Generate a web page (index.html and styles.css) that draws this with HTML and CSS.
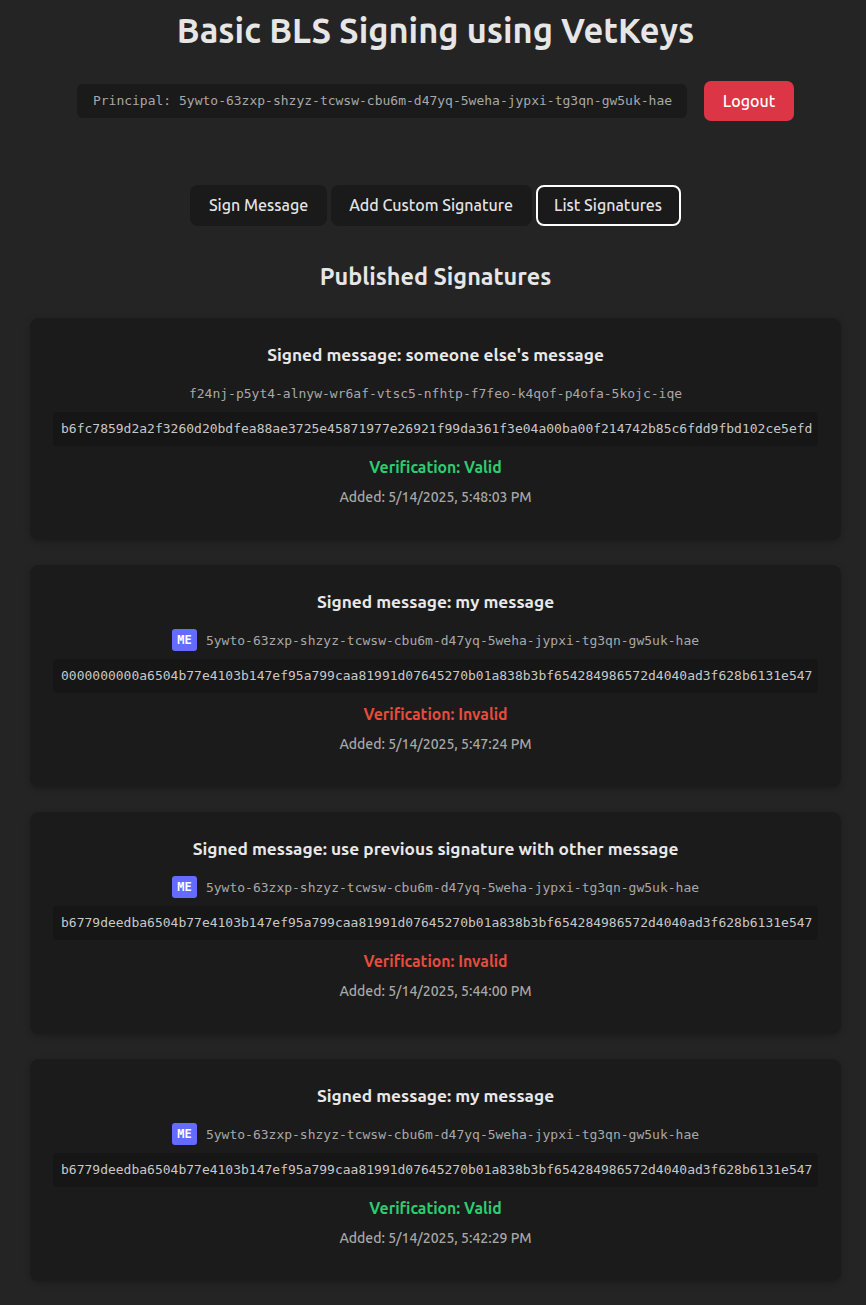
FILE: index.html
```html
<!DOCTYPE html>
<html lang="en">
<head>
<meta charset="utf-8">
<title>Basic BLS Signing using VetKeys</title>
<link rel="stylesheet" href="styles.css">
</head>
<body>
<main class="app">
  <h1 class="title">Basic BLS Signing using VetKeys</h1>
  <div class="session">
    <div class="principal">Principal: 5ywto-63zxp-shzyz-tcwsw-cbu6m-d47yq-5weha-jypxi-tg3qn-gw5uk-hae</div>
    <button class="logout">Logout</button>
  </div>
  <nav class="tabs">
    <button class="tab">Sign Message</button>
    <button class="tab">Add Custom Signature</button>
    <button class="tab active">List Signatures</button>
  </nav>
  <h2 class="section-title">Published Signatures</h2>
  <section class="list">
    <article class="card">
      <h3 class="card-title">Signed message: someone else's message</h3>
      <div class="owner"><span class="owner-id">f24nj-p5yt4-alnyw-wr6af-vtsc5-nfhtp-f7feo-k4qof-p4ofa-5kojc-iqe</span></div>
      <div class="sig">b6fc7859d2a2f3260d20bdfea88ae3725e45871977e26921f99da361f3e04a00ba00f214742b85c6fdd9fbd102ce5efd</div>
      <div class="verify valid">Verification: Valid</div>
      <div class="added">Added: 5/14/2025, 5:48:03 PM</div>
    </article>
    <article class="card">
      <h3 class="card-title">Signed message: my message</h3>
      <div class="owner"><span class="me">ME</span><span class="owner-id">5ywto-63zxp-shzyz-tcwsw-cbu6m-d47yq-5weha-jypxi-tg3qn-gw5uk-hae</span></div>
      <div class="sig">0000000000a6504b77e4103b147ef95a799caa81991d07645270b01a838b3bf654284986572d4040ad3f628b6131e547</div>
      <div class="verify invalid">Verification: Invalid</div>
      <div class="added">Added: 5/14/2025, 5:47:24 PM</div>
    </article>
    <article class="card">
      <h3 class="card-title">Signed message: use previous signature with other message</h3>
      <div class="owner"><span class="me">ME</span><span class="owner-id">5ywto-63zxp-shzyz-tcwsw-cbu6m-d47yq-5weha-jypxi-tg3qn-gw5uk-hae</span></div>
      <div class="sig">b6779deedba6504b77e4103b147ef95a799caa81991d07645270b01a838b3bf654284986572d4040ad3f628b6131e547</div>
      <div class="verify invalid">Verification: Invalid</div>
      <div class="added">Added: 5/14/2025, 5:44:00 PM</div>
    </article>
    <article class="card">
      <h3 class="card-title">Signed message: my message</h3>
      <div class="owner"><span class="me">ME</span><span class="owner-id">5ywto-63zxp-shzyz-tcwsw-cbu6m-d47yq-5weha-jypxi-tg3qn-gw5uk-hae</span></div>
      <div class="sig">b6779deedba6504b77e4103b147ef95a799caa81991d07645270b01a838b3bf654284986572d4040ad3f628b6131e547</div>
      <div class="verify valid">Verification: Valid</div>
      <div class="added">Added: 5/14/2025, 5:42:29 PM</div>
    </article>
  </section>
</main>
</body>
</html>
```

FILE: styles.css
```css
html, body {
  margin: 0;
  padding: 0;
  background: #242424;
}
body {
  font-family: "Ubuntu", Lato, "Noto Sans", sans-serif;
  font-weight: 500;
  color: rgba(255, 255, 255, 0.87);
}
.app {
  padding: 11px 25px 24px 30px;
  display: flex;
  flex-direction: column;
  align-items: stretch;
}
.title {
  margin: 0;
  font-size: 34.4px;
  line-height: 40px;
  font-weight: 700;
  text-align: center;
  color: #e6e6e6;
}
.session {
  margin-top: 30px;
  display: flex;
  justify-content: center;
  align-items: center;
  gap: 17px;
}
.principal {
  background: #1a1a1a;
  border-radius: 6px;
  padding: 8px 15px 8px 16px;
  font-family: "DejaVu Sans Mono", monospace;
  font-weight: 400;
  font-size: 13px;
  line-height: 18px;
  color: #a8a8a8;
}
.logout {
  background: #dc3545;
  color: #fff;
  border: none;
  border-radius: 7px;
  width: 90px;
  height: 40px;
  font-family: inherit;
  font-weight: 500;
  font-size: 16px;
  cursor: pointer;
}
.tabs {
  margin-top: 64px;
  display: flex;
  justify-content: center;
  gap: 4px;
}
.tab {
  background: #1a1a1a;
  color: rgba(255, 255, 255, 0.9);
  border: 2px solid transparent;
  border-radius: 8px;
  padding: 8px 16.5px;
  height: 41px;
  font-family: inherit;
  font-weight: 500;
  font-size: 16px;
  line-height: 21px;
  cursor: pointer;
}
.tab.active {
  border-color: #fff;
}
.section-title {
  margin: 34px 0 0;
  font-size: 23.4px;
  line-height: 32px;
  font-weight: 700;
  text-align: center;
  color: #e6e6e6;
}
.list {
  margin-top: 26px;
  display: flex;
  flex-direction: column;
  gap: 25px;
}
.card {
  background: #1b1b1b;
  border-radius: 9px;
  padding: 24px 23px 33px;
  box-shadow: 0 2px 6px rgba(0, 0, 0, 0.25);
  display: flex;
  flex-direction: column;
  align-items: stretch;
  text-align: center;
}
.card-title {
  margin: 0;
  font-size: 17.3px;
  line-height: 26px;
  font-weight: 700;
  color: #e8e8e8;
}
.owner {
  margin-top: 14px;
  height: 22px;
  display: flex;
  justify-content: center;
  align-items: center;
  gap: 9px;
}
.owner-id {
  font-family: "DejaVu Sans Mono", monospace;
  font-weight: 400;
  font-size: 13px;
  color: #a8a8a8;
}
.me {
  background: #646cff;
  color: #fff;
  border-radius: 3px;
  width: 25px;
  height: 22px;
  display: inline-flex;
  align-items: center;
  justify-content: center;
  font-family: "DejaVu Sans Mono", monospace;
  font-size: 12px;
  font-weight: 700;
}
.sig {
  margin-top: 8px;
  background: #161616;
  border-radius: 4px;
  padding: 8px;
  font-family: "DejaVu Sans Mono", monospace;
  font-weight: 400;
  font-size: 13px;
  line-height: 18px;
  color: #c8c8c8;
  white-space: nowrap;
}
.verify {
  margin-top: 11px;
  font-size: 15.8px;
  line-height: 20px;
  font-weight: 700;
}
.verify.valid { color: #2ecc71; }
.verify.invalid { color: #e74c3c; }
.added {
  margin-top: 10px;
  font-size: 14px;
  line-height: 20px;
  color: #a8a8a8;
}
```
